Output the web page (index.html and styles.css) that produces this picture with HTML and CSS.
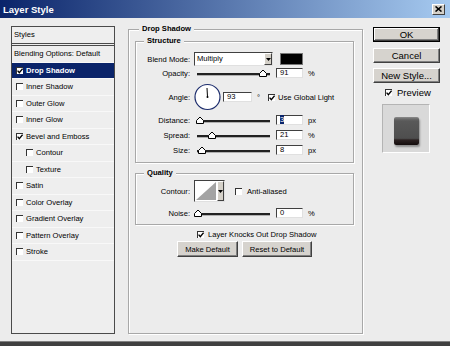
FILE: index.html
```html
<!DOCTYPE html>
<html>
<head>
<meta charset="utf-8">
<title>Layer Style</title>
<link rel="stylesheet" href="styles.css">
</head>
<body>
<div class="dialog">
  <div class="titlebar">
    <span class="title">Layer Style</span>
    <span class="close"><svg width="7" height="6" viewBox="0 0 7 6"><path d="M0.5 0.5 L6.5 5.5 M6.5 0.5 L0.5 5.5" stroke="#000" stroke-width="1.6"/></svg></span>
  </div>
  <div class="content">
    <div class="styles-panel">
      <div class="styles-head">Styles</div>
      <div class="row plain">Blending Options: Default</div>
      <div class="row selected"><span class="cb"><svg width="6" height="6" viewBox="0 0 6 6"><path d="M0.6 2.6 L2.3 4.6 L5.6 0.6" stroke="#000" stroke-width="1.4" fill="none"/></svg></span>Drop Shadow</div>
      <div class="row"><span class="cb"></span>Inner Shadow</div>
      <div class="row"><span class="cb"></span>Outer Glow</div>
      <div class="row"><span class="cb"></span>Inner Glow</div>
      <div class="row"><span class="cb"><svg width="6" height="6" viewBox="0 0 6 6"><path d="M0.6 2.6 L2.3 4.6 L5.6 0.6" stroke="#000" stroke-width="1.4" fill="none"/></svg></span>Bevel and Emboss</div>
      <div class="row sub"><span class="cb"></span>Contour</div>
      <div class="row sub"><span class="cb"></span>Texture</div>
      <div class="row"><span class="cb"></span>Satin</div>
      <div class="row"><span class="cb"></span>Color Overlay</div>
      <div class="row"><span class="cb"></span>Gradient Overlay</div>
      <div class="row"><span class="cb"></span>Pattern Overlay</div>
      <div class="row"><span class="cb"></span>Stroke</div>
    </div>

    <fieldset class="group outer">
      <legend class="outer-legend">Drop Shadow</legend>
      <fieldset class="group structure">
        <legend class="inner-legend">Structure</legend>
        <div class="frow blend">
          <span class="flabel">Blend Mode:</span>
          <div class="select"><span class="select-text">Multiply</span><span class="dd"><svg width="5" height="3" viewBox="0 0 5 3"><path d="M0 0 H5 L2.5 3 Z" fill="#000"/></svg></span></div>
          <span class="swatch"></span>
        </div>
        <div class="frow slide opacity">
          <span class="flabel">Opacity:</span>
          <svg class="slider" width="80" height="10" viewBox="0 0 80 10"><rect x="3" y="5" width="73" height="2" fill="#222"/><rect x="3" y="7" width="73" height="1" fill="#b0b0b0"/><path d="M65.5 8.5 V5.5 L69 2 L72.5 5.5 V8.5 Z" fill="#fff" stroke="#000"/></svg>
          <span class="field">91</span>
          <span class="unit">%</span>
        </div>
        <div class="frow angle">
          <span class="flabel">Angle:</span>
          <svg class="dial" width="29" height="28" viewBox="0 0 29 28"><circle cx="13.5" cy="14" r="12.5" fill="#fff" stroke="#1c2c6c" stroke-width="1.2"/><path d="M13.5 14 L13 5" stroke="#000" stroke-width="1"/><circle cx="13.5" cy="14" r="1" fill="#000"/></svg>
          <span class="field wide">93</span>
          <span class="deg">°</span>
          <span class="cb gl"><svg width="6" height="6" viewBox="0 0 6 6"><path d="M0.6 2.6 L2.3 4.6 L5.6 0.6" stroke="#000" stroke-width="1.4" fill="none"/></svg></span>
          <span class="cbtext">Use Global Light</span>
        </div>
        <div class="frow slide distance">
          <span class="flabel">Distance:</span>
          <svg class="slider" width="80" height="10" viewBox="0 0 80 10"><rect x="3" y="5" width="73" height="2" fill="#222"/><rect x="3" y="7" width="73" height="1" fill="#b0b0b0"/><path d="M2.5 8.5 V5.5 L6 2 L9.5 5.5 V8.5 Z" fill="#fff" stroke="#000"/></svg>
          <span class="field"><span class="sel">3</span></span>
          <span class="unit">px</span>
        </div>
        <div class="frow slide spread">
          <span class="flabel">Spread:</span>
          <svg class="slider" width="80" height="10" viewBox="0 0 80 10"><rect x="3" y="5" width="73" height="2" fill="#222"/><rect x="3" y="7" width="73" height="1" fill="#b0b0b0"/><path d="M14.5 8.5 V5.5 L18 2 L21.5 5.5 V8.5 Z" fill="#fff" stroke="#000"/></svg>
          <span class="field">21</span>
          <span class="unit">%</span>
        </div>
        <div class="frow slide size">
          <span class="flabel">Size:</span>
          <svg class="slider" width="80" height="10" viewBox="0 0 80 10"><rect x="3" y="5" width="73" height="2" fill="#222"/><rect x="3" y="7" width="73" height="1" fill="#b0b0b0"/><path d="M4.5 8.5 V5.5 L8 2 L11.5 5.5 V8.5 Z" fill="#fff" stroke="#000"/></svg>
          <span class="field">8</span>
          <span class="unit">px</span>
        </div>
      </fieldset>

      <fieldset class="group quality">
        <legend class="inner-legend">Quality</legend>
        <div class="frow contour-row">
          <span class="flabel">Contour:</span>
          <div class="contour"><svg width="22" height="20" viewBox="0 0 22 20"><polygon points="1,19 21,1 21,19" fill="#a3a3a3"/></svg><span class="dd tall"><svg width="5" height="3" viewBox="0 0 5 3"><path d="M0 0 H5 L2.5 3 Z" fill="#000"/></svg></span></div>
          <span class="cb aa"></span>
          <span class="cbtext">Anti-aliased</span>
        </div>
        <div class="frow slide noise">
          <span class="flabel">Noise:</span>
          <svg class="slider" width="80" height="10" viewBox="0 0 80 10"><rect x="3" y="5" width="73" height="2" fill="#222"/><rect x="3" y="7" width="73" height="1" fill="#b0b0b0"/><path d="M0.5 8.5 V5.5 L4 2 L7.5 5.5 V8.5 Z" fill="#fff" stroke="#000"/></svg>
          <span class="field">0</span>
          <span class="unit">%</span>
        </div>
      </fieldset>

      <div class="knock"><span class="cb"><svg width="6" height="6" viewBox="0 0 6 6"><path d="M0.6 2.6 L2.3 4.6 L5.6 0.6" stroke="#000" stroke-width="1.4" fill="none"/></svg></span><span class="cbtext">Layer Knocks Out Drop Shadow</span></div>
      <div class="btnrow">
        <button class="btn small make">Make Default</button>
        <button class="btn small reset">Reset to Default</button>
      </div>
    </fieldset>

    <div class="side">
      <button class="btn big default">OK</button>
      <button class="btn big cancel">Cancel</button>
      <button class="btn big newstyle">New Style...</button>
      <div class="preview-row"><span class="cb"><svg width="6" height="6" viewBox="0 0 6 6"><path d="M0.6 2.6 L2.3 4.6 L5.6 0.6" stroke="#000" stroke-width="1.4" fill="none"/></svg></span><span class="preview-label">Preview</span></div>
      <div class="preview"><div class="swatch-square"></div></div>
    </div>
  </div>
  <div class="bottom-edge"></div>
</div>
</body>
</html>
```
FILE: styles.css
```css
* { box-sizing: border-box; }
html, body { margin: 0; padding: 0; }
body {
  width: 450px;
  height: 346px;
  overflow: hidden;
  background: #ececec;
  font-family: "Liberation Sans", Arial, sans-serif;
  font-size: 7.6px;
  color: #000;
}
.dialog { display: flex; flex-direction: column; height: 346px; }

.titlebar {
  height: 18px;
  flex: none;
  display: flex;
  align-items: center;
  justify-content: space-between;
  padding: 0 5px 0 3px;
  background: linear-gradient(90deg, #0a246a 0%, #a6caf0 100%);
}
.title { color: #fff; font-weight: bold; font-size: 9.5px; }
.close {
  width: 13px;
  height: 11px;
  display: flex;
  align-items: center;
  justify-content: center;
  background: #d4d0c8;
  border: 1px solid;
  border-color: #fff #404040 #404040 #fff;
}

.content { flex: 1; display: flex; padding: 0 0 7px 11px; min-height: 0; }

/* styles list */
.styles-panel {
  width: 104px;
  margin-top: 8px;
  border: 1px solid #4a4a4a;
  background: #eeeeee;
  display: flex;
  flex-direction: column;
  flex: none;
}
.styles-head {
  height: 19px;
  line-height: 16px;
  padding: 0 2px;
  border-bottom: 3px double #4a4a4a;
}
.row {
  height: 16.5px;
  display: flex;
  align-items: center;
  padding-left: 4px;
  border-bottom: 1px solid #f8f8f8;
  white-space: nowrap;
}
.row.plain { padding-left: 2px; }
.row.sub { padding-left: 14px; }
.row.selected { background: #0a246a; color: #fff; font-weight: bold; }

.cb {
  width: 7px;
  height: 7px;
  flex: none;
  display: inline-flex;
  background: #fff;
  border-top: 1px solid #333;
  border-left: 1px solid #333;
  margin-right: 3px;
}
.cb svg { display: block; }

/* group boxes */
.group {
  margin: 0;
  min-width: 0;
  border: 1px solid #a8a8a8;
  box-shadow: 1px 1px 0 #fff, inset 1px 1px 0 #fff;
}
.group > legend {
  font-weight: bold;
  line-height: 10px;
  padding: 0 3px;
  background: #ececec;
}
.group.outer {
  margin: 6px 0 0 13px;
  width: 235px;
  padding: 2px 8px 0 6px;
  flex: none;
}
.group > .outer-legend { margin-left: 4px; }
.group > .inner-legend { margin-left: 8px; }
.group.structure { margin: 0; padding: 6px 0 7px 0; }
.group.quality { margin: 5px 0 0 0; padding: 2px 0 6px 0; }

.frow { display: flex; align-items: center; white-space: nowrap; }
.flabel { width: 54px; text-align: right; margin-right: 4px; flex: none; }

.blend { height: 14px; }
.select {
  width: 79px;
  height: 14px;
  display: flex;
  background: #fff;
  border: 1px solid;
  border-color: #404040 #e0e0e0 #e0e0e0 #404040;
}
.select-text { flex: 1; line-height: 12px; padding-left: 2px; }
.dd {
  width: 8px;
  display: flex;
  align-items: center;
  justify-content: center;
  background: #d4d0c8;
  border: 1px solid;
  border-color: #fff #404040 #404040 #fff;
}
.swatch {
  width: 23px;
  height: 12px;
  margin-left: 7px;
  background: #000;
  border: 1px solid #777;
}

.slide { height: 10px; margin-top: 5px; }
.opacity { margin-top: 2px; }
.slider { display: block; flex: none; }
.field {
  width: 27px;
  height: 10px;
  margin-left: 2px;
  line-height: 8px;
  padding-left: 3px;
  background: #fff;
  border: 1px solid;
  border-color: #404040 #e0e0e0 #e0e0e0 #404040;
}
.field.wide { width: 29px; margin-left: 0; }
.sel { background: #0a246a; color: #fff; }
.unit { margin-left: 5px; }

.angle { height: 28px; margin-top: 5px; }
.distance { margin-top: 4px; }
.dial { display: block; flex: none; }
.deg { margin-left: 5px; }
.gl { margin-left: 8px; }

.contour-row { height: 22px; }
.contour {
  width: 31px;
  height: 22px;
  display: flex;
  background: #fff;
  border: 1px solid;
  border-color: #404040 #e0e0e0 #e0e0e0 #404040;
}
.contour svg { display: block; flex: none; }
.dd.tall { width: 8px; }
.aa { margin-left: 10px; margin-right: 5px; }
.noise { margin-top: 6px; }

.knock {
  display: flex;
  align-items: center;
  height: 9px;
  margin-top: 5px;
  padding-left: 62px;
  white-space: nowrap;
}
.knock .cb { margin-right: 4px; }
.btnrow { display: flex; justify-content: center; gap: 4px; margin-top: 2px; }

.btn {
  margin: 0;
  padding: 0;
  font-family: "Liberation Sans", Arial, sans-serif;
  color: #000;
  background: #d6d3ce;
  border: 1px solid;
  border-color: #fff #404040 #404040 #fff;
  box-shadow: inset -1px -1px 0 #808080;
  white-space: nowrap;
}
.btn.small { height: 16px; font-size: 7.6px; }
.make { width: 61px; }
.reset { width: 70px; }

.side {
  width: 67px;
  margin-left: 10px;
  margin-top: 9px;
  display: flex;
  flex-direction: column;
  align-self: flex-start;
  flex: none;
}
.btn.big { height: 15px; width: 67px; font-size: 9.5px; }
.btn.default { border: 1px solid #000; box-shadow: inset -1px -1px 0 #404040, inset 1px 1px 0 #fff, inset -2px -2px 0 #808080; }
.cancel { margin-top: 6px; }
.newstyle { margin-top: 5px; }
.preview-row {
  display: flex;
  align-items: center;
  height: 8px;
  margin-top: 5px;
  padding-left: 12px;
}
.preview-row .cb { margin-right: 5px; }
.preview-label { font-size: 9.5px; }
.preview {
  width: 48px;
  height: 49px;
  margin: 8px 0 0 9px;
  background: #d9d9d9;
  border: 1px solid;
  border-color: #b4b4b4 #fff #fff #b4b4b4;
  display: flex;
  justify-content: center;
  padding-top: 12px;
}
.swatch-square {
  width: 25px;
  height: 28px;
  border-radius: 2px;
  background: linear-gradient(180deg, #8c8c8c 0, #6a6a6a 2px, #595959 4px, #4e4e4e 76%, #2c2222 82%, #140c0c 100%);
  box-shadow: 1px 2px 2px rgba(0,0,0,0.35);
}

.bottom-edge {
  height: 5px;
  flex: none;
  background: #404040;
  border-top: 1px solid #808080;
}
```
